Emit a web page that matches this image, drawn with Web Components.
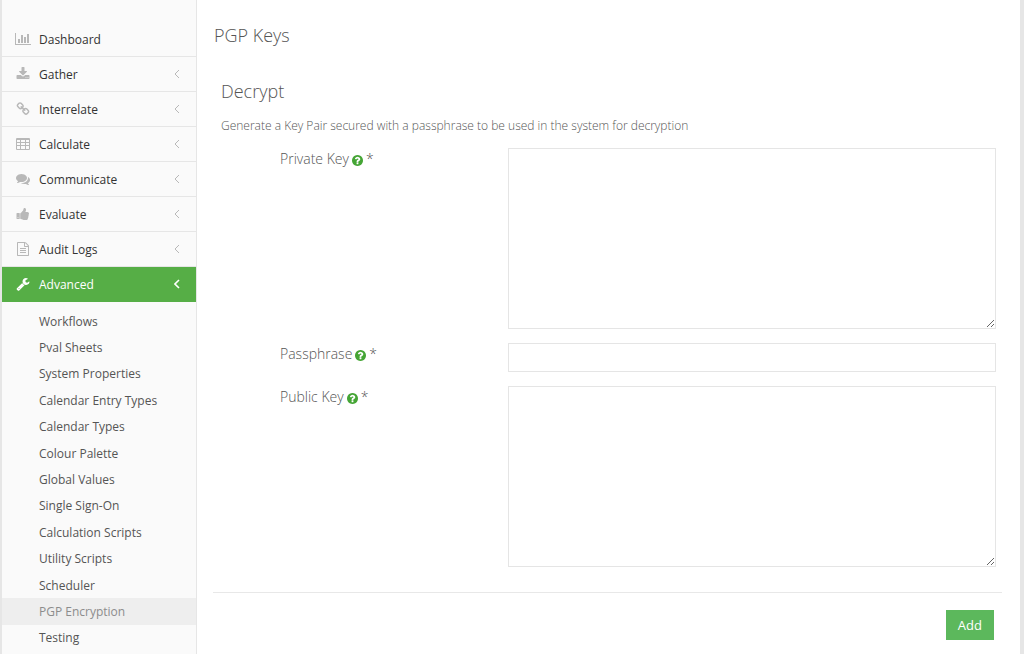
<!DOCTYPE html>
<html lang="en">
<head>
<meta charset="utf-8">
<meta name="viewport" content="width=device-width, initial-scale=1">
<title>PGP Keys</title>
<style>
  body { margin: 0; font-family: "Open Sans", "Noto Sans", sans-serif; font-size: 12px; color: #666; background: #fff; }
</style>
</head>
<body>
<app-shell>
  <side-nav slot="nav">
    <nav-item icon="chart" leaf>Dashboard</nav-item>
    <nav-item icon="download">Gather</nav-item>
    <nav-item icon="link">Interrelate</nav-item>
    <nav-item icon="table">Calculate</nav-item>
    <nav-item icon="comments">Communicate</nav-item>
    <nav-item icon="thumb">Evaluate</nav-item>
    <nav-item icon="file">Audit Logs</nav-item>
    <nav-item icon="wrench" active>Advanced</nav-item>
    <sub-nav>
      <sub-item>Workflows</sub-item>
      <sub-item>Pval Sheets</sub-item>
      <sub-item>System Properties</sub-item>
      <sub-item>Calendar Entry Types</sub-item>
      <sub-item>Calendar Types</sub-item>
      <sub-item>Colour Palette</sub-item>
      <sub-item>Global Values</sub-item>
      <sub-item>Single Sign-On</sub-item>
      <sub-item>Calculation Scripts</sub-item>
      <sub-item>Utility Scripts</sub-item>
      <sub-item>Scheduler</sub-item>
      <sub-item current>PGP Encryption</sub-item>
      <sub-item>Testing</sub-item>
    </sub-nav>
  </side-nav>
  <key-page>
    <span slot="title">PGP Keys</span>
    <span slot="section">Decrypt</span>
    <span slot="intro">Generate a Key Pair secured with a passphrase to be used in the system for decryption</span>
    <form-field label="Private Key" type="area"></form-field>
    <form-field label="Passphrase" type="text"></form-field>
    <form-field label="Public Key" type="area"></form-field>
  </key-page>
</app-shell>
<script>
const ICONS = {
  chart: ['0 0 2048 1792', 16, 'M640 896v512h-256v-512h256zm384-512v1024h-256v-1024h256zm1024 1152v128h-2048v-1536h128v1408h1920zm-640-896v768h-256v-768h256zm384-384v1152h-256v-1152h256z'],
  download: ['0 0 1792 1792', 14, 'M1344 1344q0-26-19-45t-45-19-45 19-19 45 19 45 45 19 45-19 19-45zm256 0q0-26-19-45t-45-19-45 19-19 45 19 45 45 19 45-19 19-45zm128-224v320q0 40-28 68t-68 28h-1472q-40 0-68-28t-28-68v-320q0-40 28-68t68-28h465l135 136q58 56 136 56t136-56l136-136h464q40 0 68 28t28 68zm-325-569q17 41-14 70l-448 448q-18 19-45 19t-45-19l-448-448q-31-29-14-70 17-39 59-39h256v-448q0-26 19-45t45-19h256q26 0 45 19t19 45v448h256q42 0 59 39z'],
  link: ['0 0 1792 1792', 14, 'M1520 1216q0-40-28-68l-208-208q-28-28-68-28-42 0-72 32 3 3 19 18.5t21.5 21.5 15 19 13 25.5 3.5 27.5q0 40-28 68t-68 28q-15 0-27.5-3.5t-25.5-13-19-15-21.5-21.5-18.5-19q-33 31-33 73 0 40 28 68l206 207q27 27 68 27 40 0 68-26l147-146q28-28 28-67zm-703-705q0-40-28-68l-206-207q-28-28-68-28-39 0-68 27l-147 146q-28 28-28 67 0 40 28 68l208 208q27 27 68 27 42 0 72-31-3-3-19-18.5t-21.5-21.5-15-19-13-25.5-3.5-27.5q0-40 28-68t68-28q15 0 27.5 3.5t25.5 13 19 15 21.5 21.5 18.5 19q33-31 33-73zm895 705q0 120-85 203l-147 146q-83 83-203 83-121 0-204-85l-206-207q-83-83-83-203 0-123 88-209l-88-88q-86 88-208 88-120 0-204-84l-208-208q-84-84-84-204t85-203l147-146q83-83 203-83 121 0 204 85l206 207q83 83 83 203 0 123-88 209l88 88q86-88 208-88 120 0 204 84l208 208q84 84 84 204z'],
  table: ['0 0 14 14', 14, 'M1 1h12q1 0 1 1v10q0 1-1 1h-12q-1 0-1-1v-10q0-1 1-1zM1 3v2h3v-2zM5 3v2h4v-2zM10 3v2h3v-2zM1 6v2h3v-2zM5 6v2h4v-2zM10 6v2h3v-2zM1 9v3h3v-3zM5 9v3h4v-3zM10 9v3h3v-3z'],
  comments: ['0 0 1792 1792', 14, 'M1408 768q0 139-94 257t-256.5 186.5-353.5 68.5q-86 0-176-16-124 88-278 128-36 9-86 16h-3q-11 0-20.5-8t-11.5-21q-1-3-1-6.5t.5-6.5 2-6l2.5-5 3.5-5.5 4-5 4.5-5 4-4.5q5-6 23-25t26-29.5 22.5-29 25-38.5 20.5-44q-124-72-195-177t-71-224q0-139 94-257t256.5-186.5 353.5-68.5 353.5 68.5 256.5 186.5 94 257zm384 256q0 120-71 224.5t-195 176.5q10 24 20.5 44t25 38.5 22.5 29 26 29.5 23 25q1 1 4 4.5t4.5 5 4 5 3.5 5.5l2.5 5 2 6 .5 6.5-1 6.5q-3 14-13 22t-22 7q-50-7-86-16-154-40-278-128-90 16-176 16-271 0-472-132 58 4 88 4 161 0 309-45t264-129q125-92 192-212t67-254q0-77-23-152 129 71 204 178t75 230z'],
  thumb: ['0 0 1792 1792', 14, 'M320 1344q0-26-19-45t-45-19q-27 0-45.5 19t-18.5 45q0 27 18.5 45.5t45.5 18.5q26 0 45-18.5t19-45.5zm160-512v640q0 26-19 45t-45 19h-288q-26 0-45-19t-19-45v-640q0-26 19-45t45-19h288q26 0 45 19t19 45zm1184 0q0 86-55 149 15 44 15 76 3 76-43 137 17 56 0 117-15 57-54 94 9 112-49 181-64 76-197 78h-129q-66 0-144-15.5t-121.5-29-120.5-39.5q-123-43-158-44-26-1-45-19.5t-19-44.5v-641q0-25 18-43.5t43-20.5q24-2 76-59t101-121q68-87 101-120 18-18 31-48t17.5-48.5 13.5-60.5q7-39 12.5-61t19.5-52 34-50q19-19 45-19 46 0 82.5 10.5t60 26 40 40.5 24 45 12 50 5 45 .5 39q0 38-9.5 76t-19 60-27.5 56q-3 6-10 18t-11 22-8 24h277q78 0 135 57t57 135z'],
  file: ['0 0 1792 1792', 14, 'M1596 380q28 28 48 76t20 88v1152q0 40-28 68t-68 28h-1344q-40 0-68-28t-28-68v-1600q0-40 28-68t68-28h896q40 0 88 20t76 48zm-444-244v376h376q-10-29-22-41l-313-313q-12-12-41-22zm384 1528v-1024h-416q-40 0-68-28t-28-68v-416h-768v1536h1280zm-1024-864q0-14 9-23t23-9h704q14 0 23 9t9 23v64q0 14-9 23t-23 9h-704q-14 0-23-9t-9-23v-64zm736 224q14 0 23 9t9 23v64q0 14-9 23t-23 9h-704q-14 0-23-9t-9-23v-64q0-14 9-23t23-9h704zm0 256q14 0 23 9t9 23v64q0 14-9 23t-23 9h-704q-14 0-23-9t-9-23v-64q0-14 9-23t23-9h704z'],
  wrench: ['0 0 1792 1792', 14, 'M448 1472q0-26-19-45t-45-19-45 19-19 45 19 45 45 19 45-19 19-45zm644-420l-682 682q-37 37-90 37-52 0-91-37l-106-108q-38-36-38-90 0-53 38-91l681-681q39 98 114.5 173.5t173.5 114.5zm634-435q0 39-23 106-47 134-164.5 217.5t-258.5 83.5q-185 0-316.5-131.5t-131.5-316.5 131.5-316.5 316.5-131.5q58 0 121.5 16.5t107.5 46.5q16 11 16 28t-16 28l-293 169v224l193 107q5-3 79-48.5t135.5-81 70.5-35.5q15 0 23.5 10t8.5 25z'],
  help: ['128 128 1536 1536', 11, 'M1024 1376v-192q0-14-9-23t-23-9h-192q-14 0-23 9t-9 23v192q0 14 9 23t23 9h192q14 0 23-9t9-23zm256-672q0-88-55.5-163t-138.5-116-170-41q-243 0-371 213-15 24 8 42l132 100q7 6 19 6 16 0 25-12 53-68 86-92 34-24 86-24 48 0 85.5 26t37.5 59q0 38-20 61t-68 45q-63 28-115.5 86.5t-52.5 125.5v36q0 14 9 23t23 9h192q14 0 23-9t9-23q0-19 21.5-49.5t54.5-49.5q32-18 49-28.5t46-35 44.5-48 28-60.5 12.5-81zm384 192q0 209-103 385.5t-279.5 279.5-385.5 103-385.5-103-279.5-279.5-103-385.5 103-385.5 279.5-279.5 385.5-103 385.5 103 279.5 279.5 103 385.5z']
};

class Base extends HTMLElement {
  connectedCallback() {
    if (this.shadowRoot) return;
    this.attachShadow({ mode: 'open' }).innerHTML = this.view();
  }
}

customElements.define('app-icon', class extends Base {
  view() {
    const [box, width, path] = ICONS[this.getAttribute('name')];
    const height = Math.min(width, 14);
    return `<style>:host{display:inline-block;line-height:0} svg{display:block;fill:currentColor}</style>
      <svg viewBox="${box}" width="${width}" height="${height}" aria-hidden="true"><path fill-rule="evenodd" d="${path}"/></svg>`;
  }
});

customElements.define('app-shell', class extends Base {
  view() {
    return `<style>
      :host{display:grid;grid-template-columns:195px minmax(0,1fr);min-height:100vh;box-sizing:border-box;
        border-left:2px solid #e6e6e6;border-right:4px solid #e6e6e6}
      </style><slot name="nav"></slot><slot></slot>`;
  }
});

customElements.define('side-nav', class extends Base {
  view() {
    return `<style>
      :host{display:block;background:#fafafa;border-right:1px solid #e6e6e6;padding-top:22px}
      </style><nav><slot></slot></nav>`;
  }
});

customElements.define('nav-item', class extends Base {
  view() {
    const chevron = this.hasAttribute('leaf') ? '' :
      '<svg class="chevron" viewBox="0 0 6 10" width="6" height="10" aria-hidden="true"><path d="M5 1L1 5l4 4"/></svg>';
    return `<style>
      :host{display:block;--icon:#b8b8b8;--line:#e6e6e6}
      :host([active]){--icon:#fff;--line:#56ae46}
      a{display:grid;grid-template-columns:18px 1fr auto;column-gap:7px;align-items:center;height:34px;
        padding:0 16px 0 12px;border-bottom:1px solid var(--line);color:#333;text-decoration:none}
      :host([active]) a{background:#56ae46;color:#fff}
      app-icon{justify-self:center;color:var(--icon)}
      .chevron{fill:none;stroke:var(--icon);stroke-width:1}
      :host([active]) .chevron{stroke-width:1.6}
      </style><a href="#"><app-icon name="${this.getAttribute('icon')}"></app-icon><span><slot></slot></span>${chevron}</a>`;
  }
});

customElements.define('sub-nav', class extends Base {
  view() {
    return `<style>:host{display:grid;grid-auto-rows:1fr;min-height:343px;padding-top:6px}</style><slot></slot>`;
  }
});

customElements.define('sub-item', class extends Base {
  view() {
    return `<style>
      :host{display:grid}
      a{display:flex;align-items:center;padding-left:37px;color:#555;text-decoration:none}
      :host([current]) a{background:#eee;color:#8c8c8c}
      </style><a href="#"><slot></slot></a>`;
  }
});

customElements.define('form-field', class extends Base {
  view() {
    const control = this.getAttribute('type') === 'area'
      ? '<textarea id="control" required></textarea>'
      : '<input id="control" type="text" required>';
    return `<style>
      :host{display:grid;grid-template-columns:228px minmax(0,1fr);align-items:start}
      label{display:flex;align-items:center;gap:3px;line-height:22px;font-size:14px;font-weight:300;color:#555}
      app-icon{color:#45a535;padding-top:2px}
      textarea,input{display:block;box-sizing:border-box;width:100%;margin:0;padding:6px 12px;border:1px solid #e5e5e5;
        border-radius:0;background:#fff;font:inherit;color:#333;outline:0}
      textarea{height:181px;resize:vertical}
      input{height:29px}
      </style><label for="control">${this.getAttribute('label')}<app-icon name="help"></app-icon><span>*</span></label>${control}`;
  }
});

customElements.define('key-page', class extends Base {
  view() {
    return `<style>
      :host{display:block;padding:20px 18px 14px 16px}
      h1,h2,p{margin:0;font-weight:300}
      h1,h2{font-size:18px;line-height:30px;color:#555}
      h1{padding-left:1px}
      h2,p{padding-left:8px}
      h2{margin-top:26px}
      p{margin-top:10px;line-height:20px;color:#555}
      .fields{display:grid;gap:14px;padding:12px 6px 25px 67px}
      footer{display:flex;justify-content:flex-end;border-top:1px solid #e8e8e8;padding:17px 8px 0 0}
      button{border:0;border-radius:0;background:#5cb85c;color:#fff;font:inherit;font-size:13px;line-height:18px;padding:6px 12px}
      </style>
      <main>
        <h1><slot name="title"></slot></h1>
        <h2><slot name="section"></slot></h2>
        <p><slot name="intro"></slot></p>
        <form>
          <div class="fields"><slot></slot></div>
          <footer><button type="button">Add</button></footer>
        </form>
      </main>`;
  }
});
</script>
</body>
</html>
